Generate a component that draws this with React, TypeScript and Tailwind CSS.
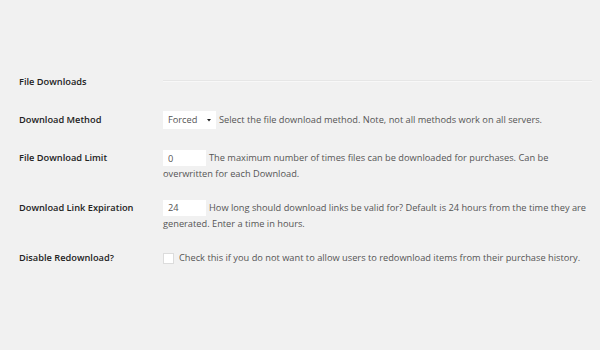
const App = () => {
  return (
    <div
      className="w-[600px] h-[350px] bg-[#f1f1f1] text-[9.25px] text-[#555] overflow-hidden"
      style={{ fontFamily: '"Open Sans", "Liberation Sans", sans-serif' }}
    >
      <div className="pt-[74px] pl-[19px] pr-[8px]">
        {/* section title */}
        <div className="flex items-center h-[16px]">
          <div className="w-[144px] font-semibold text-[#222] leading-[16px]">File Downloads</div>
          <div className="flex-1 -mt-[3px] border-t border-t-[#e6e6e6] border-b border-b-[#f8f8f8]" />
        </div>

        {/* download method */}
        <div className="flex mt-[21px]">
          <div className="w-[144px] font-semibold text-[#222] leading-[18px]">Download Method</div>
          <div className="flex-1 flex items-center leading-[18px]">
            <div className="w-[53px] h-[18px] bg-white flex items-center justify-between pl-[5px] pr-[5px] text-[#555]">
              <span>Forced</span>
              <svg width="4" height="4" viewBox="0 0 4 4">
                <path d="M0 1 L4 1 L2 3.5 Z" fill="#222" />
              </svg>
            </div>
            <span className="ml-[3px]">
              Select the file download method. Note, not all methods work on all servers.
            </span>
          </div>
        </div>

        {/* download limit */}
        <div className="flex mt-[21px]">
          <div className="w-[144px] font-semibold text-[#222] leading-[16px]">File Download Limit</div>
          <div className="flex-1 leading-[15.5px]">
            <input
              readOnly
              value="0"
              className="inline-block align-top w-[43px] h-[16px] bg-white pl-[5px] mr-[3px] text-[9.25px] text-[#555] outline-none"
            />
            The maximum number of times files can be downloaded for purchases. Can be overwritten for each
            Download.
          </div>
        </div>

        {/* link expiration */}
        <div className="flex mt-[18px]">
          <div className="w-[144px] font-semibold text-[#222] leading-[16px]">Download Link Expiration</div>
          <div className="flex-1 leading-[15.5px]">
            <input
              readOnly
              value="24"
              className="inline-block align-top w-[43px] h-[16px] bg-white pl-[5px] mr-[3px] text-[9.25px] text-[#555] outline-none"
            />
            How long should download links be valid for? Default is 24 hours from the time they are generated.
            Enter a time in hours.
          </div>
        </div>

        {/* disable redownload */}
        <div className="flex mt-[19px]">
          <div className="w-[144px] font-semibold text-[#222] leading-[16px]">Disable Redownload?</div>
          <div className="flex-1 flex items-center leading-[16px]">
            <span className="w-[11px] h-[11px] bg-white border border-[#dcdcdc] mr-[5px] shrink-0" />
            <span>Check this if you do not want to allow users to redownload items from their purchase history.</span>
          </div>
        </div>
      </div>
    </div>
  );
};

export default App;
